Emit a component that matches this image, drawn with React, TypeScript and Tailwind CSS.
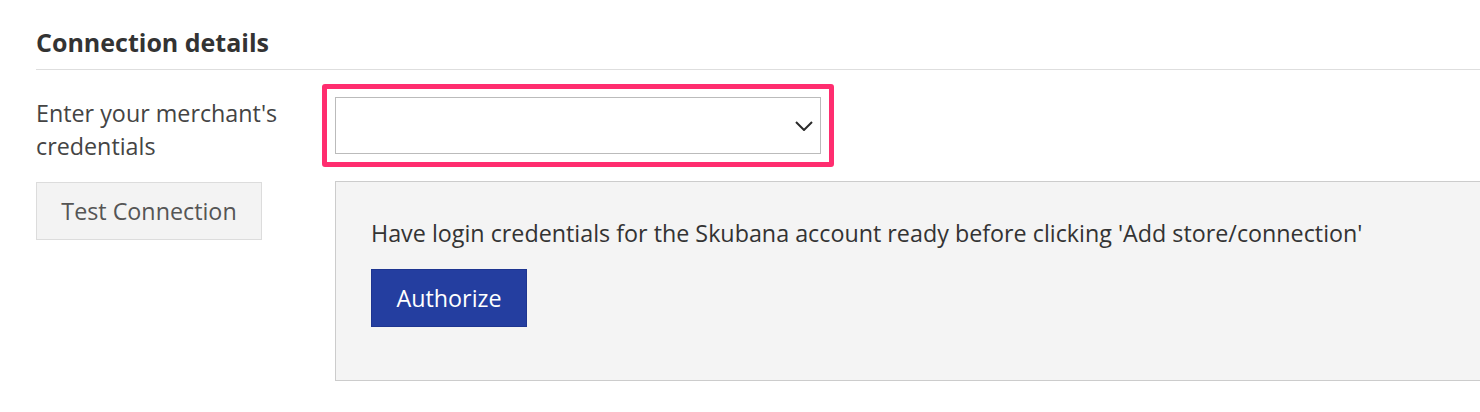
import React from 'react'

const Chevron = () => (
  <svg width="18" height="10" viewBox="0 0 18 10" fill="none" className="text-[#2a2a2a]">
    <path d="M1 1l8 8 8-8" stroke="currentColor" strokeWidth="2" />
  </svg>
)

const App = () => {
  return (
    <div className="min-h-[412px] bg-white pl-9 pt-[27px] text-[#333] font-['Open_Sans',sans-serif]">
      {/* Section title */}
      <h2 className="text-[25px] font-bold leading-[30px]">Connection details</h2>
      <div className="mt-[12px] h-px bg-[#dedede]" />

      <div className="mt-[27px] grid grid-cols-[299px_1fr] grid-rows-[84px_auto]">
        {/* Credentials label + select */}
        <div className="text-[23.3px] leading-[33px] text-[#444]">
          Enter your merchant's
          <br />
          credentials
        </div>
        <div className="relative h-[57px] w-[486px] self-start">
          <div className="flex h-[57px] items-center justify-end border border-[#bbb] bg-white pr-[7px]">
            <Chevron />
          </div>
          {/* highlight annotation */}
          <div className="pointer-events-none absolute -inset-[13px] rounded-[3px] border-[5px] border-[#ff2d6f]" />
        </div>

        {/* Test connection button */}
        <div className="pt-px">
          <button className="h-[58px] w-[226px] border border-[#dcdcdc] bg-[#f3f3f3] text-[23.3px] text-[#555]">
            Test Connection
          </button>
        </div>

        {/* Authorize panel */}
        <div className="h-[200px] border border-r-0 border-[#cccccc] bg-[#f4f4f4] pl-[35px] pt-[35px]">
          <p className="text-[23.3px] leading-[33px] text-[#333]">
            Have login credentials for the Skubana account ready before clicking 'Add store/connection'
          </p>
          <button className="mt-[19px] h-[58px] w-[156px] border border-[#1e3590] bg-[#243ea0] text-[23.3px] text-white">
            Authorize
          </button>
        </div>
      </div>
    </div>
  )
}

export default App
